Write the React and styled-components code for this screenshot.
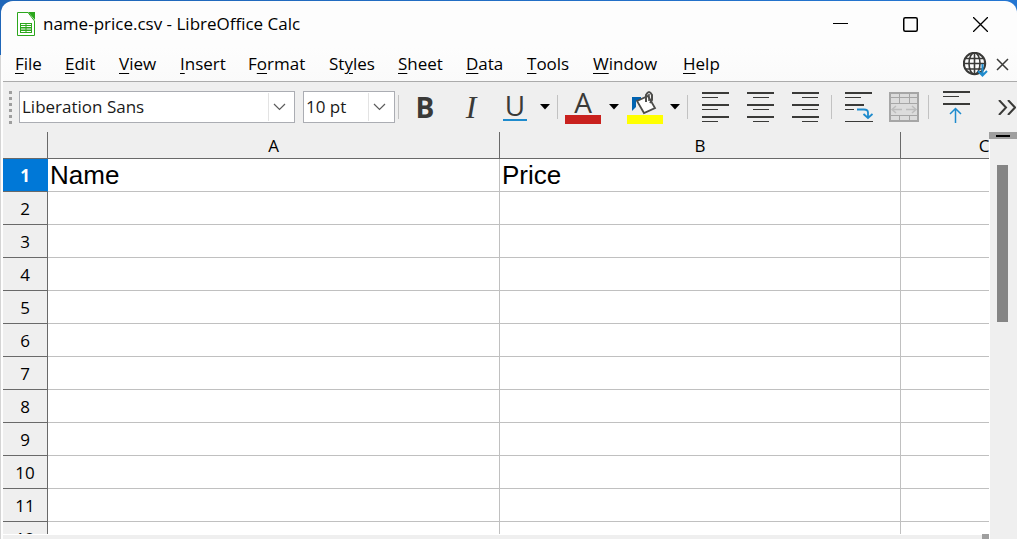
import React from 'react';
import styled, { createGlobalStyle } from 'styled-components';

const GlobalStyle = createGlobalStyle`
  * { box-sizing: border-box; }
  html, body { margin: 0; }
  body { background: linear-gradient(90deg, #1f66b8, #2476d2); font-family: "Open Sans", "Noto Sans", sans-serif; overflow: hidden; }
  button, select { font: inherit; color: inherit; padding: 0; border: 0; background: none; }
`;

const Desktop = styled.div`
  height: 100vh;
  padding-top: 1px;
  display: flex;
  background: linear-gradient(180deg, transparent 55px, #d4d4d4 55px);
`;

const Window = styled.div`
  flex: 1;
  min-width: 0;
  margin-left: 1px;
  padding-left: 2px;
  display: flex;
  flex-direction: column;
  background: #fdfdfd;
  border-radius: 12px 12px 0 0;
  overflow: hidden;
  color: #000;
`;

const TitleBar = styled.header`
  height: 46px;
  flex: none;
  display: flex;
  align-items: center;
  padding-left: 14px;
  gap: 8px;
`;

const Title = styled.h1`
  margin: 0;
  flex: 1;
  font-size: 17px;
  line-height: 24px;
  font-weight: 400;
  white-space: nowrap;
`;

const WindowControls = styled.div`
  display: flex;
  padding-right: 2px;
`;

const WindowButton = styled.button`
  width: 70px;
  height: 46px;
  display: grid;
  place-items: center;
`;

const MenuBar = styled.nav`
  height: 34px;
  flex: none;
  display: flex;
  align-items: center;
  justify-content: space-between;
  padding: 0 8px 0 12px;
  background: linear-gradient(#fdfdfd, #fafafa);
`;

const MenuList = styled.div`
  display: grid;
  grid-template-columns: 50px 54px 61px 68px 81px 69px 68px 61px 66px 90px 60px;
`;

const MenuItem = styled.button`
  text-align: left;
  font-size: 17px;
  line-height: 24px;
`;

const MenuTools = styled.div`
  display: flex;
  align-items: center;
  gap: 8px;
`;

const IconButton = styled.button`
  display: grid;
  place-items: center;
`;

const Key = styled.span`
  text-decoration: underline;
  text-decoration-thickness: 1px;
  text-underline-offset: 3px;
`;

const Toolbar = styled.div`
  height: 51px;
  flex: none;
  display: flex;
  align-items: center;
  border-top: 1px solid #ababab;
  padding-left: 6px;
  background: #efefef;
`;

const Grip = styled.div`
  width: 3px;
  height: 33px;
  margin-right: 7px;
  background: repeating-linear-gradient(180deg, #9e9e9e 0 3px, transparent 3px 6px);
`;

const Combo = styled.label`
  position: relative;
  flex: none;
  width: ${(p) => p.$width}px;
  height: 32px;
  margin-right: ${(p) => p.$after}px;
  border: 1px solid #abadb3;
  background: #fff;
  svg { position: absolute; right: 0; top: 0; pointer-events: none; }
`;

const Select = styled.select`
  appearance: none;
  display: block;
  width: 100%;
  height: 30px;
  padding: 0 0 2px 2px;
  font-size: 17px;
  color: #1a1a1a;
`;

const Tool = styled.button`
  flex: none;
  width: ${(p) => p.$width}px;
  height: 44px;
  display: grid;
  place-items: center;
`;

const Letter = styled.span`
  font-family: ${(p) => p.$family || '"Open Sans", sans-serif'};
  font-size: ${(p) => p.$size || 28}px;
  font-weight: ${(p) => p.$weight || 400};
  font-style: ${(p) => (p.$italic ? 'italic' : 'normal')};
  line-height: 24px;
  color: #3a3a38;
`;

const Marked = styled.span`
  display: block;
  width: ${(p) => p.$width}px;
  height: ${(p) => p.$height}px;
  border-bottom: ${(p) => p.$bar}px solid ${(p) => p.$color};
  line-height: 24px;
`;

const Separator = styled.div`
  flex: none;
  width: 1px;
  height: 24px;
  margin: 0 ${(p) => p.$after || 3}px 0 3px;
  background: #c2c2c2;
`;

const Overflow = styled(Tool)`
  margin-left: auto;
`;

const Body = styled.main`
  flex: 1;
  min-height: 0;
  display: flex;
  background: #efefef;
`;

const Main = styled.div`
  flex: 1;
  min-width: 0;
  display: flex;
  flex-direction: column;
`;

const Sheet = styled.div`
  flex: 1;
  min-height: 0;
  overflow: hidden;
  background: #fff;
`;

const Grid = styled.table`
  width: 1065px;
  table-layout: fixed;
  border-collapse: separate;
  border-spacing: 0;
`;

const Col = styled.col`
  width: ${(p) => p.$width}px;
`;

const ColumnHead = styled.th`
  height: 27px;
  padding: 2px 0 0;
  font-size: 17px;
  line-height: 24px;
  font-weight: 400;
  background: #efefef;
  border-right: 1px solid #696969;
  border-bottom: 1px solid #696969;
`;

const RowHead = styled.th`
  height: 33px;
  padding: 2px 0 0;
  font-size: 17px;
  line-height: 30px;
  font-weight: ${(p) => (p.$active ? 700 : 400)};
  color: ${(p) => (p.$active ? '#fff' : '#000')};
  background: ${(p) => (p.$active ? '#0078d7' : '#efefef')};
  border-right: 1px solid ${(p) => (p.$active ? '#0078d7' : '#696969')};
  border-bottom: 1px solid #696969;
`;

const Cell = styled.td`
  height: 33px;
  padding: 0 2px;
  font-family: "Liberation Sans", Arial, sans-serif;
  font-size: 26px;
  line-height: 32px;
  border-right: 1px solid #c0c0c0;
  border-bottom: 1px solid #c0c0c0;
`;

const BottomBar = styled.div`
  height: 5px;
  display: flex;
  justify-content: flex-end;
  border-top: 1px solid #fff;
`;

const BottomSplit = styled.div`
  width: 7px;
  margin-top: -1px;
  background: #9f9f9f;
`;

const Scroll = styled.div`
  width: 28px;
  flex: none;
  border-left: 1px solid #fff;
`;

const SplitHandle = styled.div`
  height: 7px;
  margin-left: -1px;
  display: grid;
  place-items: center;
  background: #9f9f9f;
  &::after { content: ""; width: 14px; height: 2px; background: #000; }
`;

const Thumb = styled.div`
  width: 11px;
  height: 157px;
  margin: 26px 0 0 7px;
  background: #858585;
`;

const menus = [['', 'F', 'ile'], ['', 'E', 'dit'], ['', 'V', 'iew'], ['', 'I', 'nsert'], ['F', 'o', 'rmat'], ['St', 'y', 'les'], ['', 'S', 'heet'], ['', 'D', 'ata'], ['', 'T', 'ools'], ['', 'W', 'indow'], ['', 'H', 'elp']];

const rows = [['Name', 'Price', ''], ...Array.from({ length: 11 }, () => ['', '', ''])];

const Chevron = () => (
  <svg width="26" height="30" fill="none">
    <path d="M.5 1v28" stroke="#e3e3e3" />
    <path d="M6 12l5.500 5.500L17 12" stroke="#5c5c5c" strokeWidth="1.200" />
  </svg>
);

const Arrow = ({ label }) => (
  <Tool $width={18} aria-label={label}>
    <svg width="10" height="6"><path d="M0 0h10L5 5.500z" fill="#000" /></svg>
  </Tool>
);

const Align = ({ label, short }) => (
  <Tool $width={45} aria-label={label}>
    <svg width="27" height="30" stroke="#3a3a38">
      <path d="M0 1h27M0 13h27M0 25h27" strokeWidth="2" />
      <path d={`M${short} 5.500h16M${short} 17.500h16M${short} 29.500h16`} />
    </svg>
  </Tool>
);

export default function App() {
  return (
    <>
      <GlobalStyle />
      <Desktop>
        <Window>
          <TitleBar>
            <svg width="18" height="24" fill="none">
              <path d="M.5.500H11L17.500 9v14.500H.5z" fill="#fff" stroke="#2ca71d" />
              <path d="M11 0h7v8z" fill="#2ca71d" />
              <path d="M3 11h12v10H3z" fill="#2ca71d" />
              <path d="M4 12.500h4.500M9.500 12.500H14M4 14.500h4.500M9.500 14.500H14M4 17h4.500M9.500 17H14M4 19.500h4.500M9.500 19.500H14" stroke="#fff" />
            </svg>
            <Title>name-price.csv - LibreOffice Calc</Title>
            <WindowControls>
              <WindowButton aria-label="Minimize"><svg width="15" height="15"><path d="M0 6.500h15" stroke="#000" /></svg></WindowButton>
              <WindowButton aria-label="Maximize"><svg width="15" height="15"><rect x=".75" y=".75" width="13.500" height="13.500" rx="1.500" fill="none" stroke="#000" strokeWidth="1.500" /></svg></WindowButton>
              <WindowButton aria-label="Close"><svg width="15" height="15"><path d="M0 0l15 15M15 0L0 15" stroke="#000" strokeWidth="1.300" /></svg></WindowButton>
            </WindowControls>
          </TitleBar>
          <MenuBar>
            <MenuList>
              {menus.map(([a, k, b]) => <MenuItem key={a + k + b}>{a}<Key>{k}</Key>{b}</MenuItem>)}
            </MenuList>
            <MenuTools>
              <IconButton aria-label="Update available">
                <svg width="25" height="25" fill="none" stroke="#3a3a38" strokeWidth="1.600">
                  <circle cx="11.500" cy="11.500" r="10.700" strokeWidth="2" />
                  <ellipse cx="11.500" cy="11.500" rx="5.500" ry="10.700" />
                  <path d="M11.500 1v21M1 11.500h21M3 6.500h17M3 17h17" />
                  <path d="M19.500 12v11M15 19l4.500 4.500L24 19" stroke="#1e8bcd" strokeWidth="2" />
                </svg>
              </IconButton>
              <IconButton aria-label="Close document">
                <svg width="13" height="13"><path d="M1 1l11 11M12 1L1 12" stroke="#3a3a38" strokeWidth="1.500" /></svg>
              </IconButton>
            </MenuTools>
          </MenuBar>
          <Toolbar>
            <Grip />
            <Combo $width={276} $after={8}>
              <Select aria-label="Font name"><option>Liberation Sans</option></Select>
              <Chevron />
            </Combo>
            <Combo $width={92} $after={0}>
              <Select aria-label="Font size"><option>10 pt</option></Select>
              <Chevron />
            </Combo>
            <Separator />
            <Tool $width={46} aria-label="Bold"><Letter $weight={700}>B</Letter></Tool>
            <Tool $width={46} aria-label="Italic"><Letter $italic $family={'"Liberation Serif", serif'} $size={32}>I</Letter></Tool>
            <Tool $width={42} aria-label="Underline"><Marked $width={24} $height={28} $bar={2} $color="#1e8bcd"><Letter>U</Letter></Marked></Tool>
            <Arrow label="Underline styles" />
            <Separator />
            <Tool $width={44} aria-label="Font color"><Marked $width={36} $height={34} $bar={9} $color="#c9211e"><Letter>A</Letter></Marked></Tool>
            <Arrow label="Font color choices" />
            <Tool $width={43} aria-label="Background color">
              <svg width="36" height="34" fill="none">
                <path d="M5 21V7h9v4H9v6z" fill="#0063b1" />
                <path d="M10 11l11-5 7 12-11 5z" fill="#fff" stroke="#4d4d4b" strokeWidth="1.800" />
                <path d="M19 12V5q3-6 6 0v5l-2 3" stroke="#4d4d4b" strokeWidth="2" />
                <path d="M22 4v7" stroke="#4d4d4b" strokeWidth="1.500" />
                <path d="M0 25h36v9H0z" fill="#ff0" />
              </svg>
            </Tool>
            <Arrow label="Background color choices" />
            <Separator $after={5} />
            <Align label="Align left" short={0} />
            <Align label="Center" short={6} />
            <Align label="Align right" short={10} />
            <Separator />
            <Tool $width={48} aria-label="Wrap text">
              <svg width="28" height="30" fill="none" stroke="#3a3a38">
                <path d="M0 1h27M0 13h19" strokeWidth="2" />
                <path d="M0 5.500h16M0 17.500h9M0 29.500h28" />
                <path d="M12 17.500h7q4 0 4 3v5M18.500 22l4.500 4 4.500-4" stroke="#1e8bcd" strokeWidth="1.800" />
              </svg>
            </Tool>
            <Tool $width={42} aria-label="Merge and center cells" disabled>
              <svg width="30" height="30" fill="#dcdcdc" stroke="#a6a6a6">
                <rect x="1" y="1" width="28" height="28" strokeWidth="2" />
                <path d="M1 5.500h28M1 11.500h28M1 23.500h28M10.500 1v10M20.500 1v10M10.500 24v5M20.500 24v5" />
                <path d="M3 17.500h10M17 17.500h10M7 14l-4 3.500L7 21M23 14l4 3.500-4 3.500" fill="none" stroke="#bdbdbd" strokeWidth="1.500" />
              </svg>
            </Tool>
            <Separator />
            <Tool $width={49} aria-label="Align top">
              <svg width="27" height="32" fill="none" stroke="#3a3a38">
                <path d="M0 1h27M0 13h27" strokeWidth="2" />
                <path d="M0 5.500h16" />
                <path d="M12.500 32V18M7 23l5.500-5.500L18 23" stroke="#1e8bcd" strokeWidth="1.500" />
              </svg>
            </Tool>
            <Overflow $width={20} aria-label="More controls">
              <svg width="18" height="15" fill="none" stroke="#3a3a38" strokeWidth="2"><path d="M1 0l7 7.500L1 15M10 0l7 7.500-7 7.500" /></svg>
            </Overflow>
          </Toolbar>
          <Body>
            <Main>
              <Sheet>
                <Grid>
                  <colgroup><Col $width={45} /><Col $width={452} /><Col $width={401} /><Col $width={167} /></colgroup>
                  <thead>
                    <tr><ColumnHead />{['A', 'B', 'C'].map((c) => <ColumnHead key={c} scope="col">{c}</ColumnHead>)}</tr>
                  </thead>
                  <tbody>
                    {rows.map((cells, i) => (
                      <tr key={i}>
                        <RowHead scope="row" $active={i === 0}>{i + 1}</RowHead>
                        {cells.map((text, j) => <Cell key={j}>{text}</Cell>)}
                      </tr>
                    ))}
                  </tbody>
                </Grid>
              </Sheet>
              <BottomBar><BottomSplit /></BottomBar>
            </Main>
            <Scroll><SplitHandle /><Thumb /></Scroll>
          </Body>
        </Window>
      </Desktop>
    </>
  );
}
